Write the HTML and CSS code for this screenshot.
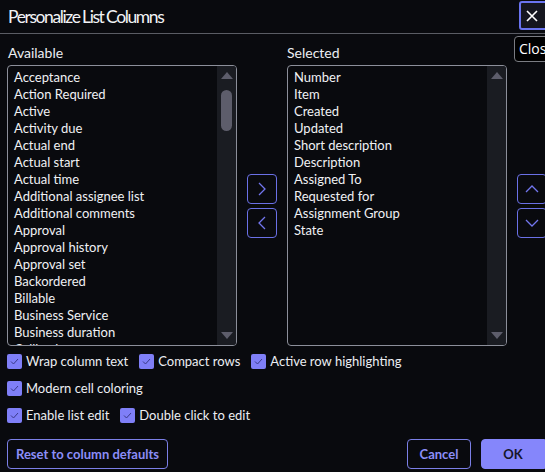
FILE: index.html
```html
<!DOCTYPE html>
<html>
<head>
<meta charset="utf-8">
<link rel="stylesheet" href="styles.css">
</head>
<body>
<div class="dialog">
  <header class="header">
    <h1 class="title">Personalize List Columns</h1>
    <button class="close-btn" aria-label="Close">
      <svg width="14" height="14" viewBox="0 0 14 14"><path d="M2 2 L12 12 M12 2 L2 12" stroke="#fff" stroke-width="1.6" fill="none"/></svg>
    </button>
    <div class="tooltip">Close</div>
  </header>

  <main class="main">
    <section class="col col-avail">
      <div class="label">Available</div>
      <div class="listbox">
        <ul class="items">
          <li>Acceptance</li>
          <li>Action Required</li>
          <li>Active</li>
          <li>Activity due</li>
          <li>Actual end</li>
          <li>Actual start</li>
          <li>Actual time</li>
          <li>Additional assignee list</li>
          <li>Additional comments</li>
          <li>Approval</li>
          <li>Approval history</li>
          <li>Approval set</li>
          <li>Backordered</li>
          <li>Billable</li>
          <li>Business Service</li>
          <li>Business duration</li>
          <li>Callback</li>
        </ul>
        <div class="scrollbar">
          <span class="tri tri-up"></span>
          <span class="thumb"></span>
          <span class="spacer"></span>
          <span class="tri tri-down"></span>
        </div>
      </div>
    </section>

    <div class="movers">
      <button class="icon-btn" aria-label="Add">
        <svg width="12" height="16" viewBox="0 0 12 16"><path d="M3 2 L9 8 L3 14" stroke="#7276ee" stroke-width="1.3" fill="none"/></svg>
      </button>
      <button class="icon-btn" aria-label="Remove">
        <svg width="12" height="16" viewBox="0 0 12 16"><path d="M9 2 L3 8 L9 14" stroke="#7276ee" stroke-width="1.3" fill="none"/></svg>
      </button>
    </div>

    <section class="col col-sel">
      <div class="label">Selected</div>
      <div class="listbox">
        <ul class="items">
          <li>Number</li>
          <li>Item</li>
          <li>Created</li>
          <li>Updated</li>
          <li>Short description</li>
          <li>Description</li>
          <li>Assigned To</li>
          <li>Requested for</li>
          <li>Assignment Group</li>
          <li>State</li>
        </ul>
        <div class="scrollbar">
          <span class="tri tri-up"></span>
          <span class="spacer"></span>
          <span class="tri tri-down"></span>
        </div>
      </div>
    </section>

    <div class="movers">
      <button class="icon-btn" aria-label="Move up">
        <svg width="16" height="12" viewBox="0 0 16 12"><path d="M2 9 L8 3 L14 9" stroke="#7276ee" stroke-width="1.3" fill="none"/></svg>
      </button>
      <button class="icon-btn" aria-label="Move down">
        <svg width="16" height="12" viewBox="0 0 16 12"><path d="M2 3 L8 9 L14 3" stroke="#7276ee" stroke-width="1.3" fill="none"/></svg>
      </button>
    </div>
  </main>

  <div class="options">
    <div class="opt-row">
      <label class="check"><span class="box"><svg width="15" height="15" viewBox="0 0 15 15"><path d="M4 7.5 L6.5 10 L11 5" stroke="#3a3a8a" stroke-width="1" fill="none"/></svg></span>Wrap column text</label>
      <label class="check"><span class="box"><svg width="15" height="15" viewBox="0 0 15 15"><path d="M4 7.5 L6.5 10 L11 5" stroke="#3a3a8a" stroke-width="1" fill="none"/></svg></span>Compact rows</label>
      <label class="check"><span class="box"><svg width="15" height="15" viewBox="0 0 15 15"><path d="M4 7.5 L6.5 10 L11 5" stroke="#3a3a8a" stroke-width="1" fill="none"/></svg></span>Active row highlighting</label>
    </div>
    <div class="opt-row">
      <label class="check"><span class="box"><svg width="15" height="15" viewBox="0 0 15 15"><path d="M4 7.5 L6.5 10 L11 5" stroke="#3a3a8a" stroke-width="1" fill="none"/></svg></span>Modern cell coloring</label>
    </div>
    <div class="opt-row">
      <label class="check"><span class="box"><svg width="15" height="15" viewBox="0 0 15 15"><path d="M4 7.5 L6.5 10 L11 5" stroke="#3a3a8a" stroke-width="1" fill="none"/></svg></span>Enable list edit</label>
      <label class="check"><span class="box"><svg width="15" height="15" viewBox="0 0 15 15"><path d="M4 7.5 L6.5 10 L11 5" stroke="#3a3a8a" stroke-width="1" fill="none"/></svg></span>Double click to edit</label>
    </div>
  </div>

  <footer class="footer">
    <button class="btn btn-outline btn-reset">Reset to column defaults</button>
    <div class="footer-right">
      <button class="btn btn-outline btn-cancel">Cancel</button>
      <button class="btn btn-primary">OK</button>
    </div>
  </footer>
</div>
</body>
</html>
```

FILE: styles.css
```css
* { box-sizing: border-box; }
html, body {
  margin: 0;
  padding: 0;
  background: #090a0e;
  overflow: hidden;
}
body {
  width: 545px;
  height: 472px;
  font-family: Lato, "Noto Sans", sans-serif;
  color: #eceef3;
}
.dialog {
  width: 545px;
  height: 472px;
  display: flex;
  flex-direction: column;
}
.header {
  position: relative;
  height: 34px;
  border-bottom: 1px solid #5a5c64;
  display: flex;
  align-items: center;
  padding-left: 8px;
  flex-shrink: 0;
}
.title {
  margin: 0;
  font-size: 17.5px;
  font-weight: 400;
  color: #f2f3f6;
  letter-spacing: -1.4px;
  word-spacing: -0.5px;
}
.close-btn {
  position: absolute;
  left: 519px;
  top: 1px;
  width: 30px;
  height: 29px;
  border: 2px solid #6a74f0;
  border-radius: 3px;
  background: #15161f;
  display: flex;
  align-items: center;
  justify-content: center;
  padding: 0 4px 0 0;
}
.tooltip {
  position: absolute;
  left: 514px;
  top: 36px;
  height: 26px;
  padding: 0 8px 0 4px;
  border: 1px solid #7a7c82;
  border-radius: 4px;
  background: #000;
  color: #fff;
  font-family: "Open Sans", "Noto Sans", sans-serif;
  font-size: 14px;
  line-height: 24px;
  z-index: 3;
}
.main {
  display: flex;
  padding: 0 0 0 7px;
  height: 313px;
  flex-shrink: 0;
}
.col { display: flex; flex-direction: column; flex-shrink: 0; }
.col-avail { width: 230px; }
.col-sel { width: 220px; }
.label {
  height: 31px;
  padding-top: 10px;
  font-size: 14px;
  line-height: 18px;
  color: #eceef3;
  padding-left: 1px;
}
.col-sel .label { padding-left: 0; }
.listbox {
  height: 281px;
  border: 1px solid #8c8f9a;
  border-radius: 4px;
  display: flex;
  overflow: hidden;
  background: #090a0e;
}
.items {
  flex: 1;
  list-style: none;
  margin: 0;
  padding: 3px 0 0 6px;
  font-size: 13px;
  line-height: 17px;
  color: #f0f1f4;
  overflow: hidden;
  white-space: nowrap;
}
.scrollbar {
  width: 19px;
  flex-shrink: 0;
  background: #1a1c22;
  display: flex;
  flex-direction: column;
  align-items: center;
  padding: 6px 0 6px;
}
.tri { width: 0; height: 0; }
.tri-up {
  border-left: 6px solid transparent;
  border-right: 6px solid transparent;
  border-bottom: 7px solid #5d5d6b;
}
.tri-down {
  border-left: 6px solid transparent;
  border-right: 6px solid transparent;
  border-top: 7px solid #5d5d6b;
}
.thumb {
  width: 11px;
  height: 41px;
  margin-top: 11px;
  border-radius: 6px;
  background: #5d5d6b;
}
.spacer { flex: 1; }
.movers {
  width: 50px;
  padding: 31px 10px 0;
  display: flex;
  flex-direction: column;
  justify-content: center;
  gap: 4px;
  flex-shrink: 0;
}
.icon-btn {
  width: 30px;
  height: 30px;
  border: 1px solid #6a70e6;
  border-radius: 4px;
  background: transparent;
  display: flex;
  align-items: center;
  justify-content: center;
  padding: 0;
}
.options {
  padding: 7px 0 0 7px;
  display: flex;
  flex-direction: column;
  gap: 12px;
}
.opt-row {
  display: flex;
  gap: 11px;
  height: 15px;
}
.check {
  display: flex;
  align-items: center;
  gap: 4px;
  font-size: 13px;
  line-height: 15px;
  color: #eceef3;
}
.box {
  width: 15px;
  height: 15px;
  border-radius: 2px;
  background: #7f7ff7;
  display: block;
}
.box svg { display: block; }
.footer {
  margin-top: auto;
  padding: 0 0 3px 7px;
  display: flex;
  justify-content: space-between;
  align-items: flex-end;
}
.footer-right { display: flex; gap: 10px; }
.btn {
  height: 30px;
  border-radius: 4px;
  font-family: Lato, "Noto Sans", sans-serif;
  font-size: 13px;
  font-weight: 700;
  padding: 0 8px;
  flex-shrink: 0;
}
.btn-outline {
  background: transparent;
  border: 1px solid #7b7fe6;
  color: #8c8ef8;
}
.btn-reset { width: 161px; }
.btn-cancel { width: 64px; }
.btn-primary {
  width: 64px;
  background: #8586fb;
  border: 1px solid #8586fb;
  color: #15162a;
  border-radius: 4px 0 0 4px;
}
```
